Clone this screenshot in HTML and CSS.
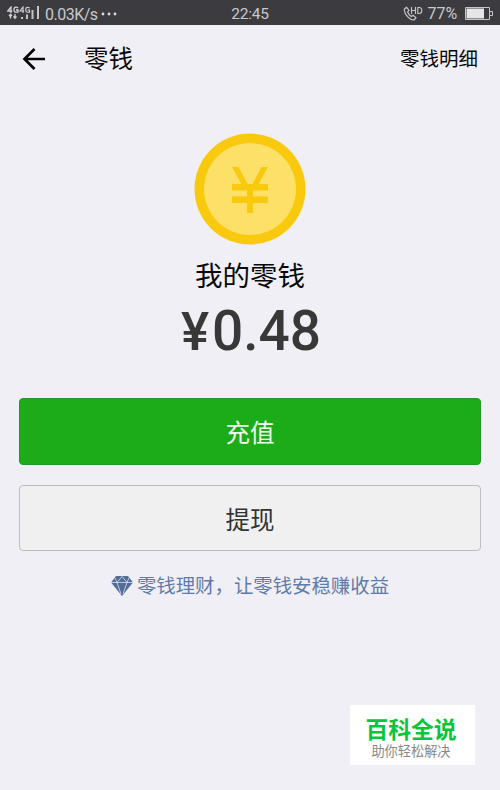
FILE: index.html
```html
<!DOCTYPE html>
<html lang="zh-CN">
<head>
<meta charset="utf-8">
<title>零钱</title>
<link rel="stylesheet" href="styles.css">
</head>
<body>
<header class="status">
  <div class="status-left">
    <svg class="signal" width="33" height="15" viewBox="0 0 33 15">
      <g fill="none" stroke="#d4d4d7" stroke-width="1.3">
        <path d="M4 7V1L.8 5H5.2M11 2.2Q10.5 1.2 9 1.2Q7 1.2 7 3.7Q7 6.2 9 6.2H11V4H9"/>
        <path d="M16 7V1L13 5H17M22.5 2.2Q22 1.2 20.5 1.2Q18.7 1.2 18.7 3.7Q18.7 6.2 20.5 6.2H22.5V4H20.5" stroke-width="1.1"/>
        <path d="M3.5 12.500V8.500M2 10L3.500 8.300L5 10M8 8V12M6.500 10.500L8 12.300L9.500 10.500"/>
      </g>
      <path fill="#c5c5c9" d="M14 11h2v2h-2zM19 8.500h2V13h-2zM24.500 4h2v9h-2zM30 0h2v13h-2z"/>
    </svg>
    <span class="speed">0.03K/s</span>
    <svg class="dots" width="16" height="4" viewBox="0 0 16 4">
      <g fill="#dedee1"><circle cx="2" cy="2" r="1.400"/><circle cx="8" cy="2" r="1.400"/><circle cx="14" cy="2" r="1.400"/></g>
    </svg>
  </div>
  <time class="clock">22:45</time>
  <div class="status-right">
    <svg width="20" height="16" viewBox="0 0 20 16">
      <path fill="none" stroke="#c5c5c9" stroke-width="1.2" stroke-linejoin="round" d="M1.500 3L3.500 1.200L6 4.400L4.600 6Q5.700 9 8.300 10.600L10 9.300L13 11.800L11.200 13.800Q8.500 14.600 4.600 10.600Q.6 6.400 1.500 3Z"/>
      <path fill="none" stroke="#c5c5c9" stroke-width="1.1" d="M8.500 1V8M12.500 1V8M8.500 4.500H12.500M14.800 1.500V7.500H16.300Q18.800 7.500 18.800 4.500Q18.800 1.500 16.300 1.500Z"/>
    </svg>
    <span class="percent">77%</span>
    <svg class="battery" width="28" height="13" viewBox="0 0 28 13">
      <path fill="none" stroke="#c5c5c9" d="M.5.500H24.500V12.500H.5ZM25 4.500H27.500V8.500H25"/>
      <path fill="#e6e6e8" d="M1.500 1.500H19V11.500H1.500Z"/>
    </svg>
  </div>
</header>
<nav class="nav">
  <svg class="back" width="24" height="22" viewBox="0 0 24 22">
    <path fill="none" stroke="#050505" stroke-width="2.7" d="M12.500 1L2.500 11L12.500 21M2.500 11H23"/>
  </svg>
  <h1 class="nav-title">零钱</h1>
  <a class="nav-detail">零钱明细</a>
</nav>
<main class="wallet">
  <svg class="coin" width="112" height="112" viewBox="0 0 112 112">
    <circle cx="56" cy="56" r="55.500" fill="#f8c90d"/>
    <circle cx="56" cy="56" r="46" fill="#fde068"/>
    <path fill="#f8c90d" d="M38 34H44.500L53.500 51H58.500L67.500 34H74L64.500 51H74V57.500H59V63.500H74V70H59V80H53V70H38V63.500H53V57.500H38V51H47.500Z"/>
  </svg>
  <h2 class="label">我的零钱</h2>
  <p class="amount"><span class="yen">¥</span>0.48</p>
  <button class="btn btn-primary">充值</button>
  <button class="btn btn-plain">提现</button>
  <a class="finance">
    <svg width="22" height="20" viewBox="0 0 22 20">
      <path fill="#526d98" d="M5 0H17L22 6.500L11 20L0 6.500Z"/>
      <path fill="none" stroke="#f0eff5" stroke-width=".7" d="M0 6.500H22M6 6.500L10 18M16 6.500L12 18M3.800 1.500L6 6.500L11 .5L16 6.500L18.200 1.500"/>
    </svg>
    <span>零钱理财，让零钱安稳赚收益</span>
  </a>
</main>
<aside class="badge">
  <strong>百科全说</strong>
  <span>助你轻松解决</span>
</aside>
</body>
</html>
```
FILE: styles.css
```css
* { box-sizing: border-box; }
body {
  margin: 0;
  height: 790px;
  overflow: hidden;
  background: #f0eff5;
  color: #080808;
  font-family: Roboto, "Noto Sans CJK SC", sans-serif;
}
.status {
  display: grid;
  grid-template-columns: 1fr auto 1fr;
  align-items: center;
  height: 25px;
  padding: 0 7px;
  background: #3b3b40;
  color: #c9c9cd;
  font-size: 16px;
  line-height: 25px;
}
.status-left, .status-right { display: flex; align-items: center; }
.status-right { justify-content: flex-end; }
.signal { margin-right: 5px; }
.speed, .clock { padding-top: 2px; }
.speed { letter-spacing: -.5px; }
.clock { font-size: 15.5px; letter-spacing: -.2px; }
.percent { margin: 0 8px 0 5px; letter-spacing: -.1px; }
.dots { margin-left: 3px; }
.nav {
  display: flex;
  align-items: center;
  height: 67px;
  padding: 0 22px;
}
.nav-title { margin: 0 auto 0 38px; padding-top: 3px; font-size: 24.500px; font-weight: 400; line-height: 36px; }
.nav-detail { padding-top: 3px; font-size: 19.500px; line-height: 28px; }
.wallet {
  display: flex;
  flex-direction: column;
  align-items: center;
  padding: 41px 19px 0;
}
.label { margin: 12px 0 0; font-size: 27.500px; font-weight: 400; line-height: 40px; }
.amount {
  margin: 1px 0 0;
  padding-left: 2px;
  color: #383838;
  font-size: 55px;
  font-weight: 500;
  line-height: 66px;
}
.yen { display: inline-block; width: 31px; font-size: 53px; line-height: 60px; }
.btn {
  width: 462px;
  height: 67px;
  border-radius: 4px;
  padding: 5px 0 0;
  font-family: inherit;
  font-size: 24.500px;
  line-height: 36px;
}
.btn-primary { margin-top: 34px; border: 1px solid #22972a; background: #1dac19; color: #f1fff0; }
.btn-plain { margin-top: 20px; height: 66px; border: 1.500px solid #bdbdc2; background: #f0f0f0; color: #333; }
.finance {
  display: flex;
  align-items: center;
  gap: 4px;
  margin-top: 20px;
  color: #5f7ba7;
  font-size: 19.400px;
  line-height: 28px;
}
.finance span { padding-top: 2px; }
.badge {
  position: absolute;
  left: 350px;
  top: 705px;
  display: flex;
  flex-direction: column;
  align-items: center;
  width: 125px;
  height: 60px;
  padding: 12px 3px 0 0;
  background: #fff;
}
.badge strong { color: #08c63b; font-size: 22.800px; font-weight: 700; line-height: 27px; }
.badge span { color: #888; font-size: 13.200px; line-height: 15px; }
```
